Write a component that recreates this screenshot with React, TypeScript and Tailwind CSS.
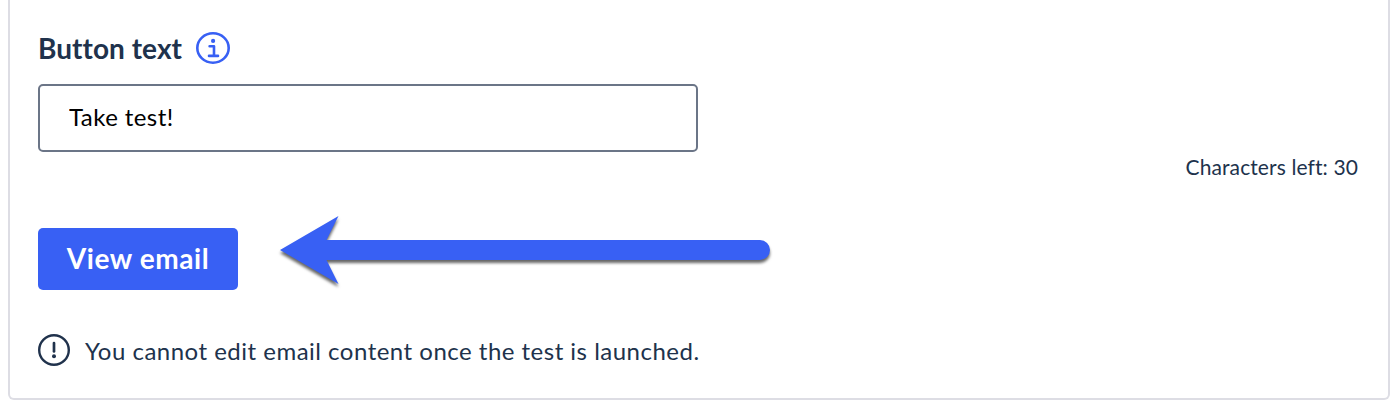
function InfoIcon() {
  return (
    <svg className="h-8 w-[34px] shrink-0" viewBox="0 0 34 32" fill="none" stroke="#3860f4">
      <ellipse cx="17" cy="16" rx="15.7" ry="14.7" strokeWidth="2.6" />
      <circle cx="17.1" cy="8.9" r="2.1" fill="#3860f4" stroke="none" />
      <path d="M13.6 14.3h4.4v9.6M13 23.9h9" strokeWidth="2.6" strokeLinecap="round" strokeLinejoin="round" />
    </svg>
  );
}

function WarningIcon() {
  return (
    <svg className="size-8 shrink-0" viewBox="0 0 32 32" fill="none" stroke="#20324c">
      <circle cx="16" cy="16" r="14.8" strokeWidth="2.4" />
      <path d="M16 9v8.4" strokeWidth="2.7" strokeLinecap="round" />
      <circle cx="16" cy="22.3" r="2" fill="#20324c" stroke="none" />
    </svg>
  );
}

function Arrow() {
  return (
    <svg className="-mt-[9px] ml-10 h-20 w-[500px] shrink-0 overflow-visible drop-shadow-[0px_3px_1.5px_rgba(0,0,0,0.6)]" viewBox="0 0 500 80">
      <path d="M2 31L60.5 -3L48.5 21H482A10 10 0 0 1 482 41H48.5L60.5 65Z" fill="#3860f4" />
    </svg>
  );
}

export default function App() {
  return (
    <div className="h-[416px] overflow-hidden bg-white pr-1.5 pl-2 font-['Lato',sans-serif] text-[#20324c] [font-variant-ligatures:none]">
      <section className="flex h-[400px] flex-col rounded-b-md border-2 border-t-0 border-[#dddde4] px-7 pt-8">
        <div className="flex h-8 items-center">
          <h2 className="w-[158px] text-[28px] leading-8 font-bold tracking-[0.05px] whitespace-nowrap">Button text</h2>
          <InfoIcon />
        </div>
        <input
          className="mt-5 h-[68px] w-[660px] shrink-0 rounded-[5px] border-2 border-[#6b7587] bg-white pr-7 pb-[3px] pl-[29px] text-2xl tracking-[0.42px] text-black outline-none"
          defaultValue="Take test!"
        />
        <p className="mt-px mr-0.5 self-end text-[21px] leading-7 tracking-[0.1px] whitespace-nowrap">Characters left: 30</p>
        <div className="mt-[47px] flex h-[62px] items-start">
          <button className="h-[62px] w-[200px] shrink-0 rounded-[5px] bg-[#3860f4] pb-0.5 text-[28px] font-bold tracking-[0.6px] whitespace-nowrap text-white">
            View email
          </button>
          <Arrow />
        </div>
        <div className="mt-11 flex h-8 items-center gap-[15px]">
          <WarningIcon />
          <p className="pt-0.5 text-2xl leading-8 tracking-[0.49px] whitespace-nowrap">You cannot edit email content once the test is launched.</p>
        </div>
      </section>
    </div>
  );
}
